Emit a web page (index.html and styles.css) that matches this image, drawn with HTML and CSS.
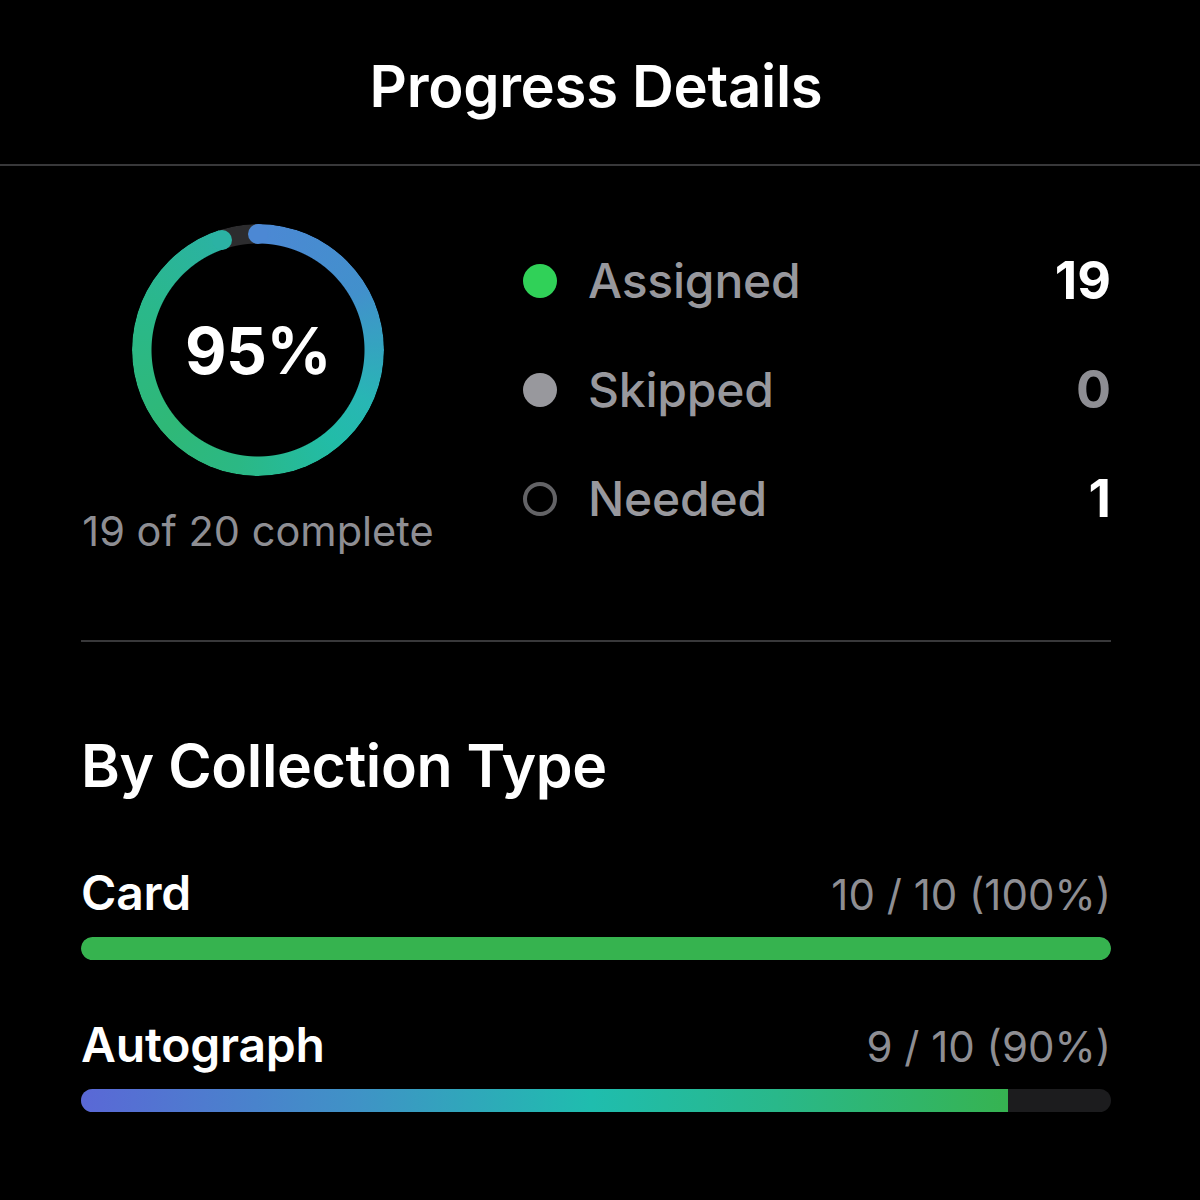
FILE: index.html
```html
<!DOCTYPE html>
<html lang="en">
<head>
  <meta charset="UTF-8">
  <meta name="viewport" content="width=device-width, initial-scale=1">
  <title>Progress Details</title>
  <link rel="stylesheet" href="styles.css">
</head>
<body>
  <div class="header">
    <h1>Progress Details</h1>
  </div>

  <div class="content">
    <div class="summary">
      <div class="ring-col">
        <div class="ring">
          <div class="ring-track"></div>
          <span class="cap cap-start"></span>
          <span class="cap cap-end"></span>
          <div class="ring-label">95%</div>
        </div>
        <p class="caption">19 of 20 complete</p>
      </div>

      <div class="legend">
        <div class="legend-row">
          <span class="dot dot-assigned"></span>
          <span class="legend-name">Assigned</span>
          <span class="legend-count">19</span>
        </div>
        <div class="legend-row">
          <span class="dot dot-skipped"></span>
          <span class="legend-name">Skipped</span>
          <span class="legend-count muted">0</span>
        </div>
        <div class="legend-row">
          <span class="dot dot-needed"></span>
          <span class="legend-name">Needed</span>
          <span class="legend-count">1</span>
        </div>
      </div>
    </div>

    <div class="divider"></div>

    <h2 class="section-title">By Collection Type</h2>

    <div class="type-row">
      <div class="type-head">
        <span class="type-name">Card</span>
        <span class="type-stat">10 / 10 (100%)</span>
      </div>
      <div class="bar"><div class="bar-fill fill-green" style="width: 100%"></div></div>
    </div>

    <div class="type-row">
      <div class="type-head">
        <span class="type-name">Autograph</span>
        <span class="type-stat">9 / 10 (90%)</span>
      </div>
      <div class="bar"><div class="bar-fill fill-gradient" style="width: 90%"></div></div>
    </div>
  </div>
</body>
</html>
```

FILE: styles.css
```css
body {
  margin: 0;
  background-color: #000;
  color: #fff;
  font-family: Inter, 'Noto Sans', Arial, sans-serif;
}
.header {
  height: 164px;
  display: flex;
  align-items: center;
  justify-content: center;
  border-bottom: 2px solid #38383a;
  padding-right: 8px;
}
.header h1 {
  margin: 8px 0 0;
  font-size: 58px;
  font-weight: 600;
  letter-spacing: -0.3px;
}
.content {
  padding: 58px 89px 0 81px;
}
.summary {
  display: flex;
}
.ring-col {
  width: 354px;
  display: flex;
  flex-direction: column;
  align-items: center;
}
.ring {
  position: relative;
  width: 252px;
  height: 252px;
}
.ring-track {
  width: 100%;
  height: 100%;
  border-radius: 50%;
  background: conic-gradient(
    #4c88d4 0deg,
    #4290cc 60deg,
    #28b6b4 115deg,
    #22bca8 140deg,
    #2bb884 190deg,
    #2fb877 230deg,
    #2ab88a 290deg,
    #2bb2a4 342deg,
    #2c2c2e 342deg 360deg
  );
  -webkit-mask: radial-gradient(farthest-side, transparent calc(100% - 20px), #000 calc(100% - 19px));
  mask: radial-gradient(farthest-side, transparent calc(100% - 20px), #000 calc(100% - 19px));
}
.cap {
  position: absolute;
  width: 20px;
  height: 20px;
  border-radius: 50%;
}
.cap-start {
  left: 116px;
  top: 0;
  background: #4c88d4;
}
.cap-end {
  left: 80px;
  top: 6px;
  background: #2bb2a4;
}
.ring-label {
  position: absolute;
  inset: 0;
  display: flex;
  align-items: center;
  justify-content: center;
  font-size: 64px;
  font-weight: 700;
  letter-spacing: -0.5px;
}
.caption {
  margin: 30px 0 0;
  font-size: 41.5px;
  color: #8e8e93;
  white-space: nowrap;
}
.legend {
  flex: 1;
  margin-left: 88px;
  margin-top: 2px;
}
.legend-row {
  height: 109px;
  display: flex;
  align-items: center;
}
.dot {
  width: 34px;
  height: 34px;
  border-radius: 50%;
  box-sizing: border-box;
  margin-right: 31px;
}
.dot-assigned {
  background: #30d158;
}
.dot-skipped {
  background: #98989d;
}
.dot-needed {
  border: 4px solid #636366;
}
.legend-name {
  flex: 1;
  font-size: 48px;
  font-weight: 500;
  color: #98989d;
  letter-spacing: -0.2px;
}
.legend-count {
  font-size: 52px;
  font-weight: 700;
  color: #fff;
}
.legend-count.muted {
  color: #8e8e93;
}
.divider {
  height: 2px;
  background: #38383a;
  margin-top: 84px;
}
.section-title {
  margin: 88px 0 0;
  font-size: 59px;
  font-weight: 600;
  letter-spacing: -0.4px;
  line-height: 72px;
}
.type-row {
  margin-top: 62px;
}
.type-row + .type-row {
  margin-top: 56px;
}
.type-head {
  display: flex;
  justify-content: space-between;
  align-items: baseline;
  line-height: 58px;
}
.type-name {
  font-size: 48px;
  font-weight: 600;
  letter-spacing: -0.2px;
}
.type-stat {
  font-size: 42px;
  color: #8e8e93;
}
.bar {
  margin-top: 13px;
  height: 23px;
  border-radius: 12px;
  background: #1c1c1e;
  overflow: hidden;
}
.bar-fill {
  height: 100%;
}
.fill-green {
  background: #36b34f;
  border-radius: 12px;
}
.fill-gradient {
  background: linear-gradient(90deg, #5a68d6 0%, #3f93c6 30%, #1fbdae 55%, #29b88a 75%, #36b351 100%);
}
```
